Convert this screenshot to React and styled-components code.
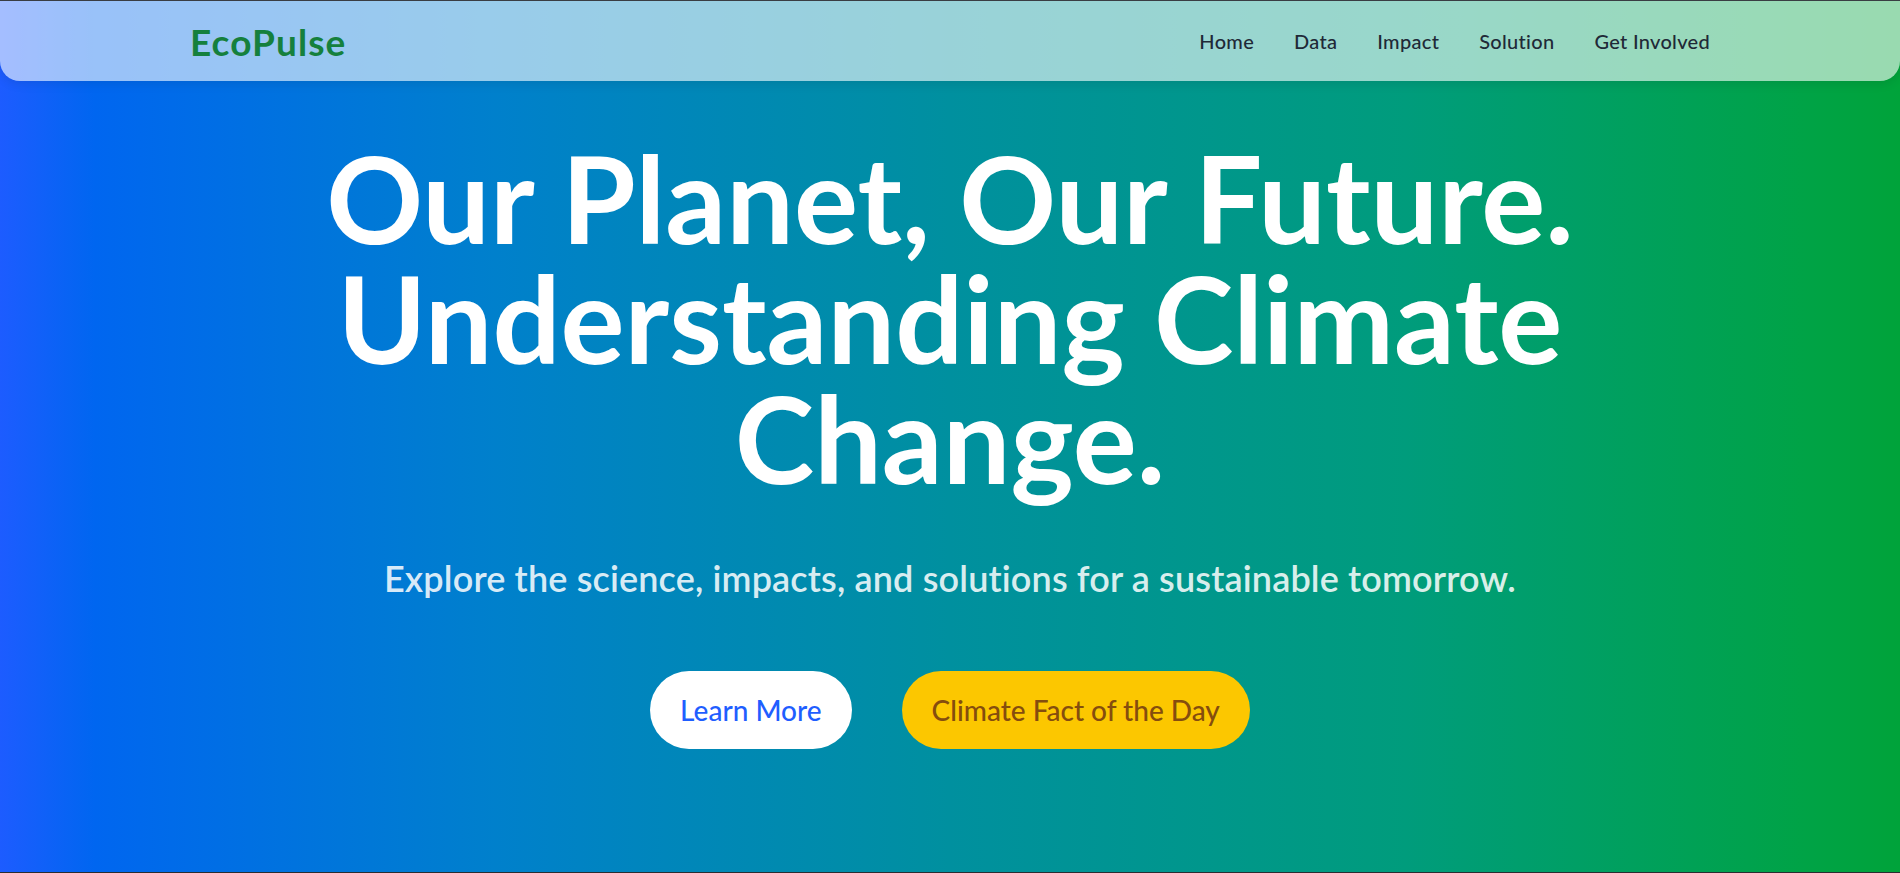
import React from "react";
import styled, { createGlobalStyle } from "styled-components";

const GlobalStyle = createGlobalStyle`
  * { box-sizing: border-box; }
  html, body { margin: 0; padding: 0; }
  body {
    background: #33373d;
    font-family: "Lato", "Open Sans", sans-serif;
  }
`;

const Page = styled.div`
  display: grid;
  min-height: 100vh;
  border-top: 1px solid #3a3e44;
  border-bottom: 1px solid #2a2d31;
`;

const Header = styled.header`
  grid-area: 1 / 1;
  align-self: start;
  z-index: 10;
  height: 80px;
  background: rgba(255, 255, 255, 0.6);
  border-radius: 0 0 20px 20px;
  box-shadow: 0 4px 10px rgba(0, 0, 0, 0.08);
`;

const NavInner = styled.nav`
  width: 80%;
  height: 100%;
  margin: 0 auto;
  display: flex;
  align-items: center;
  justify-content: space-between;
`;

const Logo = styled.div`
  font-size: 37px;
  font-weight: 700;
  color: #15803d;
  letter-spacing: 1.1px;
`;

const Links = styled.ul`
  display: flex;
  gap: 40px;
  list-style: none;
  margin: 0;
  padding: 0;
`;

const LinkItem = styled.li`
  font-size: 20px;
  font-weight: 500;
  letter-spacing: 0.3px;
  color: #1f2937;
`;

const Hero = styled.section`
  grid-area: 1 / 1;
  min-height: calc(100vh - 2px);
  background: linear-gradient(
    90deg,
    #1d5cff 0%,
    #0066f0 5%,
    #0080cc 26%,
    #00909f 50%,
    #009c7c 74%,
    #00a346 95%,
    #00a33a 100%
  );
  display: flex;
  flex-direction: column;
  align-items: center;
  justify-content: center;
  text-align: center;
  padding-top: 14px;
`;

const Title = styled.h1`
  margin: 0;
  max-width: 1400px;
  font-size: 120px;
  line-height: 120px;
  font-weight: 700;
  color: #ffffff;
`;

const Subtitle = styled.p`
  margin: 59px 0 0;
  font-size: 36px;
  line-height: 42px;
  font-weight: 600;
  letter-spacing: 0.15px;
  color: rgba(255, 255, 255, 0.86);
`;

const Actions = styled.div`
  display: flex;
  gap: 50px;
  margin-top: 72px;
`;

const PillButton = styled.button`
  border: none;
  border-radius: 9999px;
  padding: 20px 30px;
  font-family: inherit;
  font-size: 28px;
  line-height: 38px;
  font-weight: 500;
  cursor: pointer;
  background: ${(p) => (p.$variant === "fact" ? "#fcc700" : "#ffffff")};
  color: ${(p) => (p.$variant === "fact" ? "#854d0e" : "#1f5eff")};
`;

export default function App() {
  const links = ["Home", "Data", "Impact", "Solution", "Get Involved"];
  return (
    <>
      <GlobalStyle />
      <Page>
        <Header>
          <NavInner>
            <Logo>EcoPulse</Logo>
            <Links>
              {links.map((l) => (
                <LinkItem key={l}>{l}</LinkItem>
              ))}
            </Links>
          </NavInner>
        </Header>
        <Hero>
          <Title>Our Planet, Our Future. Understanding Climate Change.</Title>
          <Subtitle>
            Explore the science, impacts, and solutions for a sustainable tomorrow.
          </Subtitle>
          <Actions>
            <PillButton>Learn More</PillButton>
            <PillButton $variant="fact">Climate Fact of the Day</PillButton>
          </Actions>
        </Hero>
      </Page>
    </>
  );
}
